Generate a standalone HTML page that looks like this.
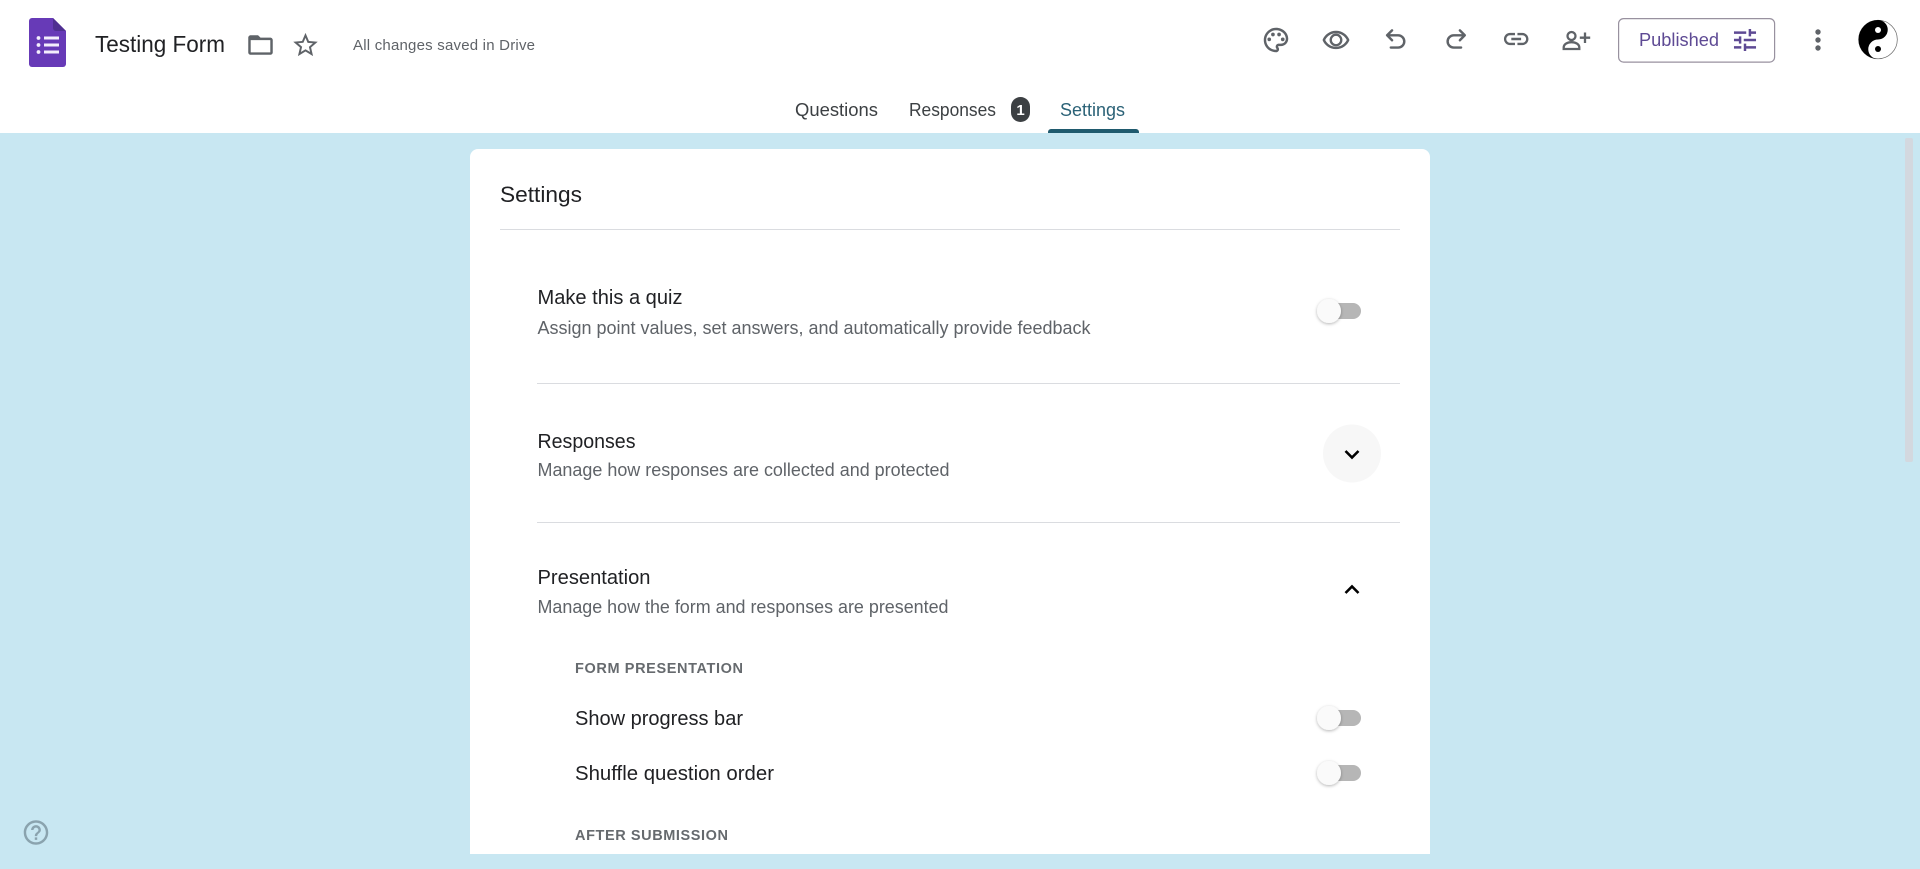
<!DOCTYPE html>
<html lang="en"><head><meta charset="utf-8"><title>Testing Form - Google Forms</title>
<style>
html,body{margin:0;padding:0;width:1920px;height:869px;overflow:hidden;background:#c8e7f2}
svg{display:block;position:absolute;left:0;top:0}
text{font-family:"Liberation Sans",sans-serif}
.t{font-size:20px;fill:#202124}
.s{font-size:18px;fill:#5f6368}
.h{font-size:14.500px;font-weight:bold;fill:#666a6e}
.i{fill:#5f6368}
</style></head><body>
<svg width="1920" height="869" viewBox="0 0 1920 869" xmlns="http://www.w3.org/2000/svg">
<defs>
<filter id="sh" x="-40%" y="-40%" width="180%" height="180%"><feDropShadow dx="0" dy="1" stdDeviation="1.500" flood-color="#000" flood-opacity=".3"/></filter>
</defs>
<rect width="1920" height="869" fill="#c8e7f2"/>
<!-- header -->
<rect width="1920" height="133" fill="#fff"/>
<!-- logo -->
<path d="M32 18H53L66 31V64a3 3 0 0 1-3 3H32a3 3 0 0 1-3-3V21a3 3 0 0 1 3-3z" fill="#673ab7"/>
<path d="M53 18L66 31H56a3 3 0 0 1-3-3z" fill="#4f2f91"/>
<g fill="#f3eefc"><rect x="44" y="36.500" width="15" height="3"/><rect x="44" y="43.500" width="15" height="3"/><rect x="44" y="50.500" width="15" height="3"/><circle cx="38.500" cy="38" r="1.900"/><circle cx="38.500" cy="45" r="1.900"/><circle cx="38.500" cy="52" r="1.900"/></g>
<text x="95" y="52" font-size="23" fill="#202124" textLength="130" lengthAdjust="spacingAndGlyphs">Testing Form</text>
<path class="i" transform="translate(245.800 30.300) scale(1.225)" d="M20 6h-8l-2-2H4c-1.100 0-1.990.9-1.990 2L2 18c0 1.100.9 2 2 2h16c1.100 0 2-.9 2-2V8c0-1.100-.9-2-2-2zm0 12H4V8h16v10z"/>
<path class="i" transform="translate(290.800 30.400) scale(1.225)" d="M22 9.240l-7.190-.62L12 2 9.190 8.630 2 9.240l5.460 4.730L5.820 21 12 17.270 18.180 21l-1.630-7.030L22 9.240zM12 15.400l-3.760 2.270 1-4.280-3.320-2.880 4.380-.38L12 6.100l1.710 4.040 4.380.38-3.320 2.880 1 4.280L12 15.400z"/>
<text x="353" y="50" font-size="15" fill="#5f6368" textLength="182" lengthAdjust="spacing">All changes saved in Drive</text>
<!-- right icons -->
<g class="i" transform="translate(1261.300 25.300) scale(1.225)"><path d="M12 22C6.490 22 2 17.510 2 12S6.490 2 12 2s10 4.040 10 9c0 3.310-2.690 6-6 6h-1.770c-.28 0-.5.22-.5.5 0 .12.05.23.13.33.41.47.64 1.060.64 1.670 0 1.380-1.120 2.500-2.500 2.500zm0-18c-4.410 0-8 3.590-8 8s3.590 8 8 8c.28 0 .5-.22.5-.5 0-.16-.08-.28-.14-.35-.41-.46-.63-1.050-.63-1.650 0-1.380 1.120-2.500 2.500-2.500H16c2.210 0 4-1.790 4-4 0-3.860-3.590-7-8-7z"/><circle cx="6.500" cy="11.500" r="1.500"/><circle cx="9.500" cy="7.500" r="1.500"/><circle cx="14.500" cy="7.500" r="1.500"/><circle cx="17.500" cy="11.500" r="1.500"/></g>
<g transform="translate(1321.300 25.900) scale(1.225)"><path class="i" d="M12 6c3.790 0 7.170 2.130 8.820 5.500C19.170 14.870 15.790 17 12 17s-7.170-2.130-8.820-5.500C4.830 8.130 8.210 6 12 6m0-2C7 4 2.730 7.110 1 11.500 2.730 15.890 7 19 12 19s9.270-3.110 11-7.500C21.270 7.110 17 4 12 4z"/><circle cx="12" cy="11.500" r="4.300" fill="none" stroke="#5f6368" stroke-width="1.900"/></g>
<path transform="translate(1381 25.500) scale(1.225)" fill="none" stroke="#5f6368" stroke-width="2" stroke-linecap="round" stroke-linejoin="round" d="M9 4L5 8l4 4M5 8h9a5 5 0 0 1 0 10H8"/>
<path transform="translate(1441.500 25.500) scale(1.225)" fill="none" stroke="#5f6368" stroke-width="2" stroke-linecap="round" stroke-linejoin="round" d="M15 4l4 4-4 4M19 8h-9a5 5 0 0 0 0 10h6"/>
<path class="i" transform="translate(1501.500 24.300) scale(1.225)" d="M3.900 12c0-1.710 1.390-3.100 3.100-3.100h4V7H7c-2.760 0-5 2.240-5 5s2.240 5 5 5h4v-1.900H7c-1.710 0-3.100-1.390-3.100-3.100zM8 13h8v-2H8v2zm9-6h-4v1.900h4c1.710 0 3.100 1.390 3.100 3.100s-1.390 3.100-3.100 3.100h-4V17h4c2.760 0 5-2.240 5-5s-2.240-5-5-5z"/>
<g fill="none" stroke="#5f6368" stroke-width="2.300"><circle cx="1571.500" cy="36" r="4"/><path d="M1563.700 49v-1.500c0-3.500 4-5.300 7.800-5.300s7.800 1.800 7.800 5.300v1.500z"/><path d="M1585 32.500v10.500M1579.800 37.700h10.400"/></g>
<!-- published -->
<rect x="1618.600" y="18.600" width="156" height="43.500" rx="5" fill="#fff" stroke="#98919f" stroke-width="1.200"/>
<text x="1639" y="46" font-size="18" fill="#5e4a94" textLength="80" lengthAdjust="spacingAndGlyphs">Published</text>
<path fill="#5e4a94" transform="translate(1730.300 25.300) scale(1.225)" d="M3 17v2h6v-2H3zM3 5v2h10V5H3zm10 16v-2h8v-2h-8v-2h-2v6h2zM7 9v2H3v2h4v2h2V9H7zm14 4v-2H11v2h10zm-6-4h2V7h4V5h-4V3h-2v6z"/>
<g class="i"><circle cx="1818" cy="32" r="2.700"/><circle cx="1818" cy="40" r="2.700"/><circle cx="1818" cy="48" r="2.700"/></g>
<!-- avatar -->
<circle cx="1878" cy="39.500" r="19.300" fill="#fff" stroke="#666" stroke-width=".7"/>
<path d="M1878 20A19.500 19.500 0 0 0 1878 59A9.750 9.750 0 0 1 1878 39.500A9.750 9.750 0 0 0 1878 20z" fill="#000"/>
<circle cx="1878" cy="30" r="3" fill="#fff"/><circle cx="1878" cy="49" r="3" fill="#000"/>
<!-- tabs -->
<text x="795" y="116" font-size="18" fill="#3c4043" textLength="83" lengthAdjust="spacingAndGlyphs">Questions</text>
<text x="909" y="116" font-size="18" fill="#3c4043" textLength="87" lengthAdjust="spacingAndGlyphs">Responses</text>
<rect x="1011" y="97" width="19" height="25" rx="9.500" fill="#3c4043"/>
<text x="1020.500" y="115" font-size="15" font-weight="bold" fill="#fff" text-anchor="middle">1</text>
<text x="1060" y="116" font-size="18" fill="#2b6277" textLength="65" lengthAdjust="spacingAndGlyphs">Settings</text>
<path d="M1048 133v-1a3 3 0 0 1 3-3h85a3 3 0 0 1 3 3v1z" fill="#1f5a6e"/>
<!-- scrollbar -->
<rect x="1905" y="138" width="8" height="324" rx="2" fill="#d3d8df"/>
<!-- card -->
<rect x="470" y="149" width="960" height="720" rx="8" fill="#fff"/>
<rect x="0" y="854" width="1920" height="15" fill="#c8e7f2"/>
<text x="500" y="202" font-size="22" fill="#202124" textLength="82" lengthAdjust="spacingAndGlyphs">Settings</text>
<rect x="500" y="229" width="900" height="1" fill="#dadce0"/>
<text class="t" x="537.500" y="304" textLength="145" lengthAdjust="spacingAndGlyphs">Make this a quiz</text>
<text class="s" x="537.500" y="334" textLength="553" lengthAdjust="spacingAndGlyphs">Assign point values, set answers, and automatically provide feedback</text>
<rect x="537" y="383" width="863" height="1" fill="#dadce0"/>
<text class="t" x="537.500" y="448" textLength="98" lengthAdjust="spacingAndGlyphs">Responses</text>
<text class="s" x="537.500" y="476" textLength="412" lengthAdjust="spacingAndGlyphs">Manage how responses are collected and protected</text>
<rect x="537" y="522" width="863" height="1" fill="#dadce0"/>
<text class="t" x="537.500" y="584" textLength="113" lengthAdjust="spacingAndGlyphs">Presentation</text>
<text class="s" x="537.500" y="613" textLength="411" lengthAdjust="spacingAndGlyphs">Manage how the form and responses are presented</text>
<text class="h" x="575" y="673" textLength="168" lengthAdjust="spacing">FORM PRESENTATION</text>
<text class="t" x="575" y="725" textLength="168" lengthAdjust="spacingAndGlyphs">Show progress bar</text>
<text class="t" x="575" y="780" textLength="199" lengthAdjust="spacingAndGlyphs">Shuffle question order</text>
<text class="h" x="575" y="840" textLength="153" lengthAdjust="spacing">AFTER SUBMISSION</text>
<!-- toggles -->
<g><rect x="1331" y="303" width="30" height="16" rx="8" fill="#b6b6b6"/><circle cx="1329" cy="311" r="12" fill="#fafafa" filter="url(#sh)"/></g>
<g><rect x="1331" y="710" width="30" height="16" rx="8" fill="#b6b6b6"/><circle cx="1329" cy="718" r="12" fill="#fafafa" filter="url(#sh)"/></g>
<g><rect x="1331" y="765" width="30" height="16" rx="8" fill="#b6b6b6"/><circle cx="1329" cy="773" r="12" fill="#fafafa" filter="url(#sh)"/></g>
<!-- chevrons -->
<circle cx="1352" cy="453.500" r="29" fill="#f7f7f7"/>
<path d="M1345.500 451l6.500 6.500 6.500-6.500" fill="none" stroke="#000" stroke-width="2.600"/>
<path d="M1345.500 593l6.500-6.500 6.500 6.500" fill="none" stroke="#000" stroke-width="2.600"/>
<!-- help -->
<path fill="#8aa3ae" transform="translate(21.300 817.800) scale(1.225)" d="M11 18h2v-2h-2v2zm1-16C6.480 2 2 6.480 2 12s4.480 10 10 10 10-4.480 10-10S17.520 2 12 2zm0 18c-4.410 0-8-3.590-8-8s3.590-8 8-8 8 3.590 8 8-3.590 8-8 8zm0-14c-2.210 0-4 1.790-4 4h2c0-1.100.9-2 2-2s2 .9 2 2c0 2-3 1.750-3 5h2c0-2.250 3-2.500 3-5 0-2.210-1.790-4-4-4z"/>
</svg>
</body></html>
